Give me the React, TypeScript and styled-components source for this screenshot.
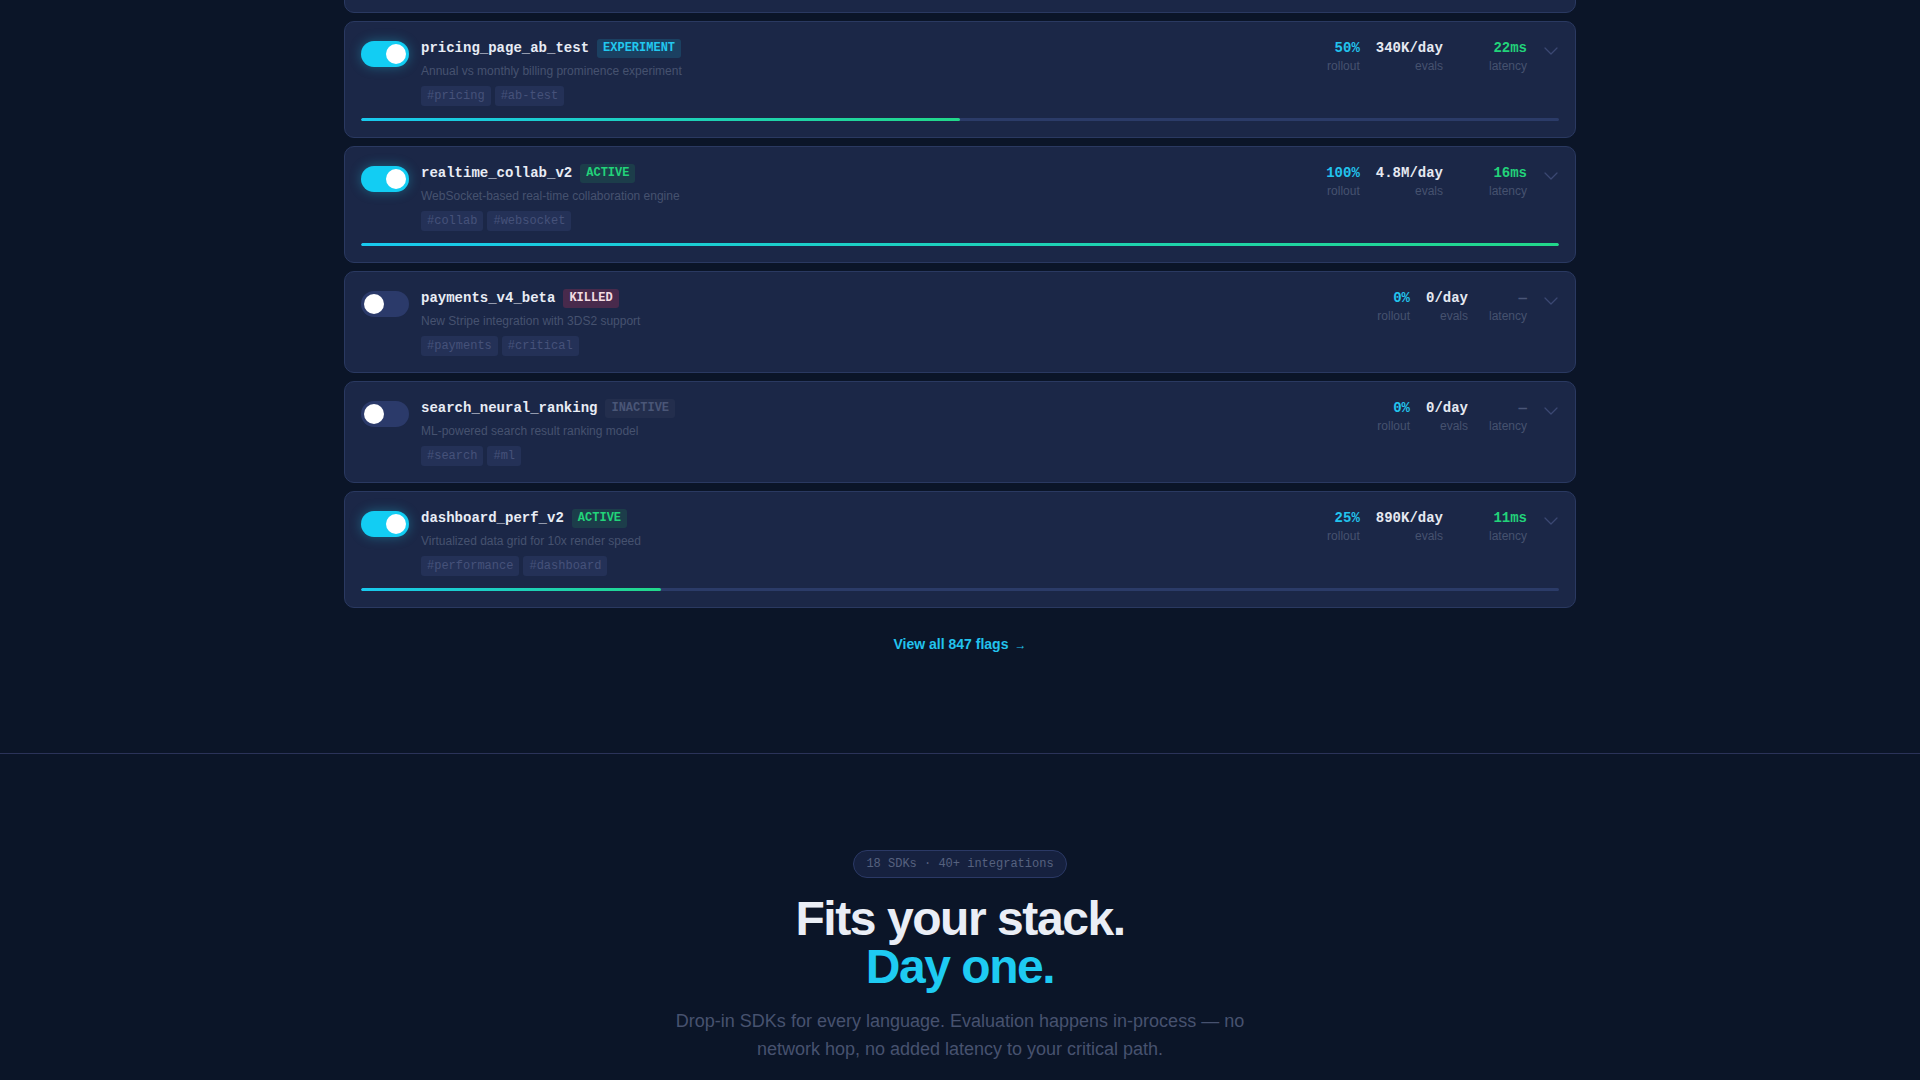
import styled, { createGlobalStyle, css } from "styled-components";
import { ChevronDown } from "lucide-react";

const GlobalStyle = createGlobalStyle`
  html, body {
    margin: 0;
    padding: 0;
    background: #0b1528;
  }
  body {
    font-family: "Liberation Sans", Arial, sans-serif;
    color: #e6eaf3;
  }
  * { box-sizing: border-box; }
`;

const MONO = `"Liberation Mono", "DejaVu Sans Mono", monospace`;

type Status = "ACTIVE" | "EXPERIMENT" | "KILLED" | "INACTIVE";

interface Flag {
  name: string;
  status: Status;
  desc: string;
  tags: string[];
  on: boolean;
  rollout: number;
  evals: string;
  latency: string | null;
}

const flags: Flag[] = [
  {
    name: "checkout_flow_v3",
    status: "ACTIVE",
    desc: "One-page checkout with saved payment methods",
    tags: ["checkout", "conversion"],
    on: true,
    rollout: 75,
    evals: "1.2M/day",
    latency: "18ms",
  },
  {
    name: "pricing_page_ab_test",
    status: "EXPERIMENT",
    desc: "Annual vs monthly billing prominence experiment",
    tags: ["pricing", "ab-test"],
    on: true,
    rollout: 50,
    evals: "340K/day",
    latency: "22ms",
  },
  {
    name: "realtime_collab_v2",
    status: "ACTIVE",
    desc: "WebSocket-based real-time collaboration engine",
    tags: ["collab", "websocket"],
    on: true,
    rollout: 100,
    evals: "4.8M/day",
    latency: "16ms",
  },
  {
    name: "payments_v4_beta",
    status: "KILLED",
    desc: "New Stripe integration with 3DS2 support",
    tags: ["payments", "critical"],
    on: false,
    rollout: 0,
    evals: "0/day",
    latency: null,
  },
  {
    name: "search_neural_ranking",
    status: "INACTIVE",
    desc: "ML-powered search result ranking model",
    tags: ["search", "ml"],
    on: false,
    rollout: 0,
    evals: "0/day",
    latency: null,
  },
  {
    name: "dashboard_perf_v2",
    status: "ACTIVE",
    desc: "Virtualized data grid for 10x render speed",
    tags: ["performance", "dashboard"],
    on: true,
    rollout: 25,
    evals: "890K/day",
    latency: "11ms",
  },
];

const Page = styled.div`
  max-width: 1232px;
  margin: 0 auto;
`;

const FlagsSection = styled.section`
  padding-bottom: 99px;
`;

// list is scrolled: the first card sits mostly above the fold
const FlagList = styled.div`
  display: flex;
  flex-direction: column;
  gap: 8px;
  margin-top: -104px;
`;

const Card = styled.div`
  background: #1b2747;
  border: 1px solid #2a3961;
  border-radius: 10px;
  padding: 16px;
`;

const TopRow = styled.div`
  display: flex;
  align-items: flex-start;
  gap: 12px;
`;

const Toggle = styled.div<{ $on: boolean }>`
  position: relative;
  flex: none;
  width: 48px;
  height: 26px;
  margin-top: 3px;
  border-radius: 13px;
  background: ${(p) => (p.$on ? "#12cdf3" : "#2b3a6a")};
  box-shadow: ${(p) => (p.$on ? "0 0 12px rgba(34, 211, 238, 0.35)" : "none")};

  &::after {
    content: "";
    position: absolute;
    top: 3px;
    left: ${(p) => (p.$on ? "25px" : "3px")};
    width: 20px;
    height: 20px;
    border-radius: 50%;
    background: #ffffff;
  }
`;

const Main = styled.div`
  flex: 1;
  min-width: 0;
`;

const NameRow = styled.div`
  display: flex;
  align-items: center;
  gap: 8px;
  height: 20px;
`;

const Name = styled.span`
  font-family: ${MONO};
  font-weight: 700;
  font-size: 14px;
  color: #e8ecf5;
`;

const badgeColors: Record<Status, ReturnType<typeof css>> = {
  ACTIVE: css`
    color: #22d37a;
    background: rgba(34, 197, 94, 0.14);
  `,
  EXPERIMENT: css`
    color: #22c8ef;
    background: rgba(34, 200, 238, 0.16);
  `,
  KILLED: css`
    color: #f3dce2;
    background: rgba(190, 50, 90, 0.28);
  `,
  INACTIVE: css`
    color: #4a5677;
    background: rgba(255, 255, 255, 0.035);
  `,
};

const Badge = styled.span<{ $status: Status }>`
  font-family: ${MONO};
  font-weight: 700;
  font-size: 12px;
  line-height: 19px;
  padding: 0 6px;
  border-radius: 3px;
  ${(p) => badgeColors[p.$status]}
`;

const Desc = styled.div`
  margin-top: 4px;
  font-size: 12px;
  line-height: 18px;
  color: #46526f;
`;

const Tags = styled.div`
  display: flex;
  gap: 4px;
  margin-top: 6px;
`;

const Tag = styled.span`
  font-family: ${MONO};
  font-size: 12px;
  line-height: 20px;
  padding: 0 6px;
  border-radius: 3px;
  background: #243157;
  color: #46527a;
`;

const Metrics = styled.div`
  display: flex;
  gap: 16px;
`;

const Metric = styled.div<{ $min?: number }>`
  text-align: right;
  min-width: ${(p) => (p.$min ? `${p.$min}px` : "0")};
`;

const Value = styled.div<{ $tone: "cyan" | "white" | "green" | "dim" }>`
  font-family: ${MONO};
  font-weight: 700;
  font-size: 14px;
  line-height: 20px;
  color: ${(p) =>
    p.$tone === "cyan"
      ? "#22c3ee"
      : p.$tone === "green"
      ? "#22d37a"
      : p.$tone === "dim"
      ? "#4a5677"
      : "#e6e9f1"};
`;

const Label = styled.div`
  font-size: 12px;
  line-height: 16px;
  color: #46526f;
`;

const Chevron = styled.div`
  flex: none;
  display: flex;
  margin: 1px -4px 0 0;
  color: #3b4872;
`;

const Track = styled.div`
  margin-top: 12px;
  height: 3px;
  border-radius: 2px;
  background: #2b3b68;
  overflow: hidden;
`;

const Fill = styled.div`
  height: 100%;
  border-radius: 2px;
  background: linear-gradient(90deg, #18c9ef, #22d88a);
`;

const ViewAll = styled.a`
  display: block;
  width: max-content;
  margin: 27px auto 0;
  font-size: 14px;
  line-height: 18px;
  font-weight: 700;
  color: #22c3ee;
  text-decoration: none;

  span {
    font-size: 12px;
    margin-left: 6px;
  }
`;

const StackSection = styled.section`
  border-top: 1px solid #2b3359;
  padding: 96px 0 80px;
  display: flex;
  flex-direction: column;
  align-items: center;
  text-align: center;
`;

const Pill = styled.div`
  font-family: ${MONO};
  font-size: 12px;
  line-height: 16px;
  padding: 5px 12px;
  border-radius: 14px;
  border: 1px solid #2b3966;
  background: #16213f;
  color: #56627f;
`;

const Heading = styled.h2`
  margin: 17px 0 0;
  font-size: 48px;
  line-height: 48px;
  font-weight: 700;
  letter-spacing: -0.03em;
  color: #eaeef6;

  span {
    display: block;
    color: #1ecbf2;
  }
`;

const Lead = styled.p`
  margin: 16px 0 0;
  max-width: 590px;
  font-size: 18px;
  line-height: 28px;
  color: #47526f;
`;

function FlagCard({ flag }: { flag: Flag }) {
  return (
    <Card>
      <TopRow>
        <Toggle $on={flag.on} />
        <Main>
          <NameRow>
            <Name>{flag.name}</Name>
            <Badge $status={flag.status}>{flag.status}</Badge>
          </NameRow>
          <Desc>{flag.desc}</Desc>
          <Tags>
            {flag.tags.map((t) => (
              <Tag key={t}>#{t}</Tag>
            ))}
          </Tags>
        </Main>
        <Metrics>
          <Metric>
            <Value $tone="cyan">{flag.rollout}%</Value>
            <Label>rollout</Label>
          </Metric>
          <Metric>
            <Value $tone="white">{flag.evals}</Value>
            <Label>evals</Label>
          </Metric>
          <Metric $min={flag.on ? 68 : 43}>
            <Value $tone={flag.latency ? "green" : "dim"}>
              {flag.latency ?? "—"}
            </Value>
            <Label>latency</Label>
          </Metric>
        </Metrics>
        <Chevron>
          <ChevronDown size={24} strokeWidth={1.25} />
        </Chevron>
      </TopRow>
      {flag.on && (
        <Track>
          <Fill style={{ width: `${flag.rollout}%` }} />
        </Track>
      )}
    </Card>
  );
}

export default function App() {
  return (
    <>
      <GlobalStyle />
      <Page>
        <FlagsSection>
          <FlagList>
            {flags.map((f) => (
              <FlagCard key={f.name} flag={f} />
            ))}
          </FlagList>
          <ViewAll href="#">
            View all 847 flags<span>→</span>
          </ViewAll>
        </FlagsSection>
      </Page>
      <StackSection>
        <Pill>18 SDKs · 40+ integrations</Pill>
        <Heading>
          Fits your stack.
          <span>Day one.</span>
        </Heading>
        <Lead>
          Drop-in SDKs for every language. Evaluation happens in-process — no
          network hop, no added latency to your critical path.
        </Lead>
      </StackSection>
    </>
  );
}
